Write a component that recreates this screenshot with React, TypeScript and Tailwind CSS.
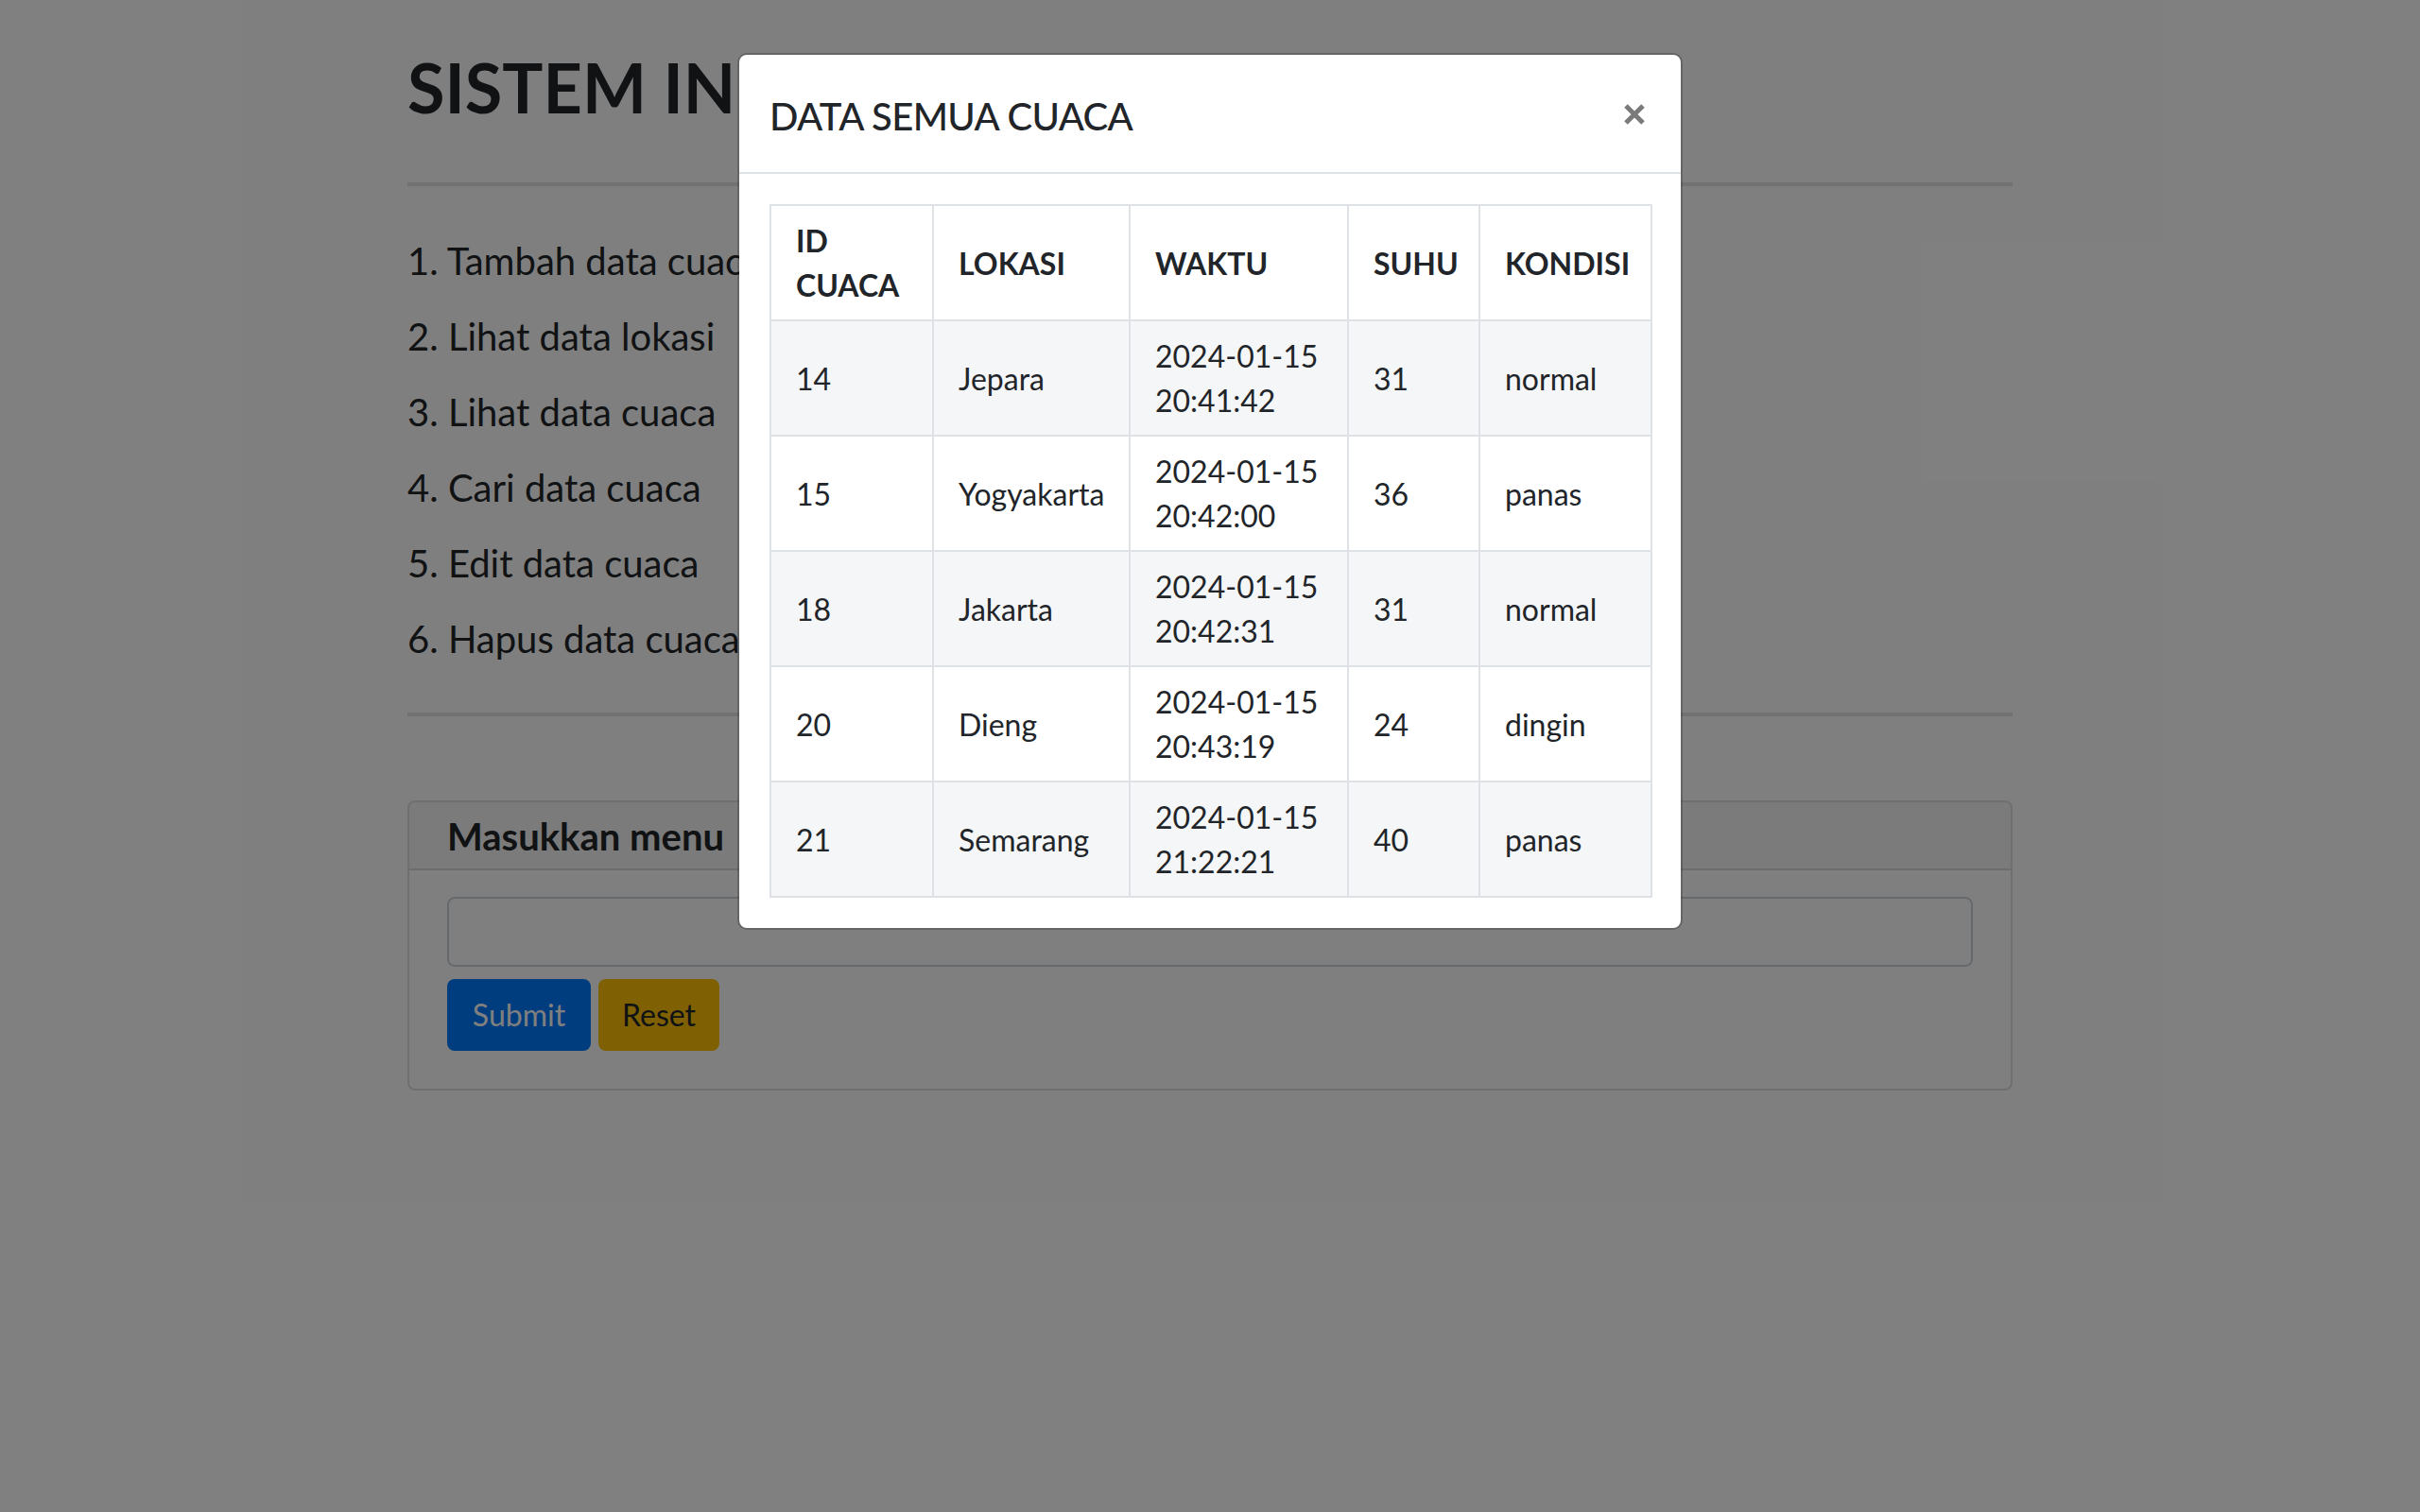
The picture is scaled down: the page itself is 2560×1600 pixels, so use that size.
const menu = [
  "1. Tambah data cuaca",
  "2. Lihat data lokasi",
  "3. Lihat data cuaca",
  "4. Cari data cuaca",
  "5. Edit data cuaca",
  "6. Hapus data cuaca",
];

const rows = [
  { id: "14", lokasi: "Jepara", tanggal: "2024-01-15", jam: "20:41:42", suhu: "31", kondisi: "normal" },
  { id: "15", lokasi: "Yogyakarta", tanggal: "2024-01-15", jam: "20:42:00", suhu: "36", kondisi: "panas" },
  { id: "18", lokasi: "Jakarta", tanggal: "2024-01-15", jam: "20:42:31", suhu: "31", kondisi: "normal" },
  { id: "20", lokasi: "Dieng", tanggal: "2024-01-15", jam: "20:43:19", suhu: "24", kondisi: "dingin" },
  { id: "21", lokasi: "Semarang", tanggal: "2024-01-15", jam: "21:22:21", suhu: "40", kondisi: "panas" },
];

const th = "border-2 border-[#dee2e6] px-[26px] py-[13px] text-left align-middle font-bold";
const td = "border-2 border-[#dee2e6] px-[26px] py-[13px] align-middle";

function ModalCuaca() {
  return (
    <div className="absolute inset-0 bg-black/50">
      <div className="mx-auto mt-[56px] w-[1000px] rounded-[10px] border-2 border-black/20 bg-white bg-clip-padding">
        <div className="flex items-center justify-between border-b-2 border-[#dee2e6] p-[32px]">
          <h5 className="pt-[6px] text-[40px] leading-[54px] font-medium tracking-[-0.6px]">DATA SEMUA CUACA</h5>
          <button type="button" className="mr-[6px] mt-[2px]" aria-label="Close">
            <svg width="22" height="22" viewBox="0 0 22 22">
              <path d="M2 2L20 20M20 2L2 20" stroke="#7a7a7a" strokeWidth="5" />
            </svg>
          </button>
        </div>
        <div className="p-[32px]">
          <table className="w-full table-fixed border-collapse border-2 border-[#dee2e6] text-[32px] leading-[47px]">
            <colgroup>
              <col className="w-[172px]" />
              <col className="w-[208px]" />
              <col className="w-[231px]" />
              <col className="w-[139px]" />
              <col className="w-[182px]" />
            </colgroup>
            <thead>
              <tr>
                <th className={th}>ID CUACA</th>
                <th className={th}>LOKASI</th>
                <th className={th}>WAKTU</th>
                <th className={th}>SUHU</th>
                <th className={th}>KONDISI</th>
              </tr>
            </thead>
            <tbody>
              {rows.map((r, i) => (
                <tr key={r.id} className={i % 2 === 0 ? "bg-[#f5f6f7]" : "bg-white"}>
                  <td className={td}>{r.id}</td>
                  <td className={td}>{r.lokasi}</td>
                  <td className={td}>
                    {r.tanggal}
                    <br />
                    {r.jam}
                  </td>
                  <td className={td}>{r.suhu}</td>
                  <td className={td}>{r.kondisi}</td>
                </tr>
              ))}
            </tbody>
          </table>
        </div>
      </div>
    </div>
  );
}

export default function App() {
  return (
    <div className="relative min-h-[1600px] bg-white text-[#212529] [font-family:Lato,sans-serif]">
      <main className="mx-auto w-[1698px] pt-[49px]">
        <h1 className="text-[72px] leading-[86px] font-bold">SISTEM INFORMASI CUACA</h1>
        <hr className="mt-[58px] h-[4px] border-0 bg-black/10" />

        <div className="mt-[39px]">
          {menu.map((m) => (
            <p key={m} className="text-[40px] leading-[80px]">
              {m}
            </p>
          ))}
        </div>
        <hr className="mt-[38px] h-[4px] border-0 bg-black/10" />

        <div className="mt-[89px] overflow-hidden rounded-[8px] border-2 border-black/[0.125]">
          <div className="flex h-[72px] items-center border-b-2 border-black/[0.125] bg-black/[0.03] px-[40px] pt-[2px] text-[40px] leading-none font-bold">
            Masukkan menu
          </div>
          <form className="px-[40px] pt-[27.7px] pb-[40.7px]">
            <input type="text" className="block h-[74px] w-full rounded-[8px] border-2 border-[#ced4da] bg-white" />
            <div className="mt-[13px] flex gap-[8px]">
              <button type="button" className="h-[76px] w-[152px] rounded-[8px] bg-[#007bff] text-[32px] text-white">
                Submit
              </button>
              <button type="button" className="h-[76px] w-[128px] rounded-[8px] bg-[#ffc107] text-[32px] text-[#212529]">
                Reset
              </button>
            </div>
          </form>
        </div>
      </main>

      <ModalCuaca />
    </div>
  );
}
